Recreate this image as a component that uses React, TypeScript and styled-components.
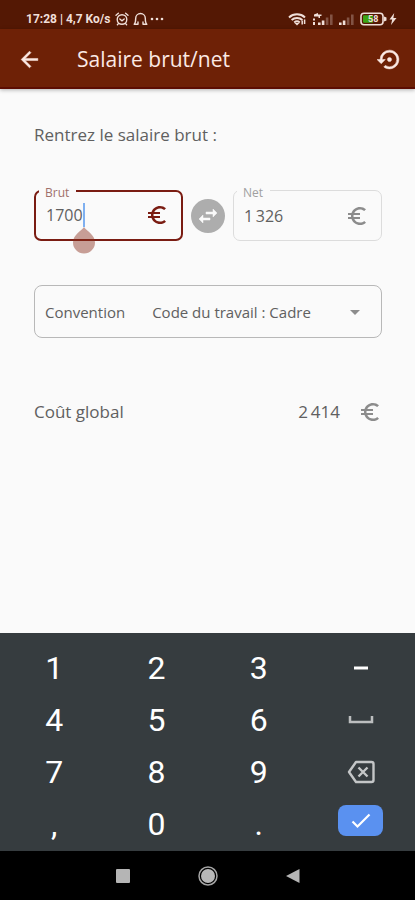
import React, { useState } from "react";
import styled, { createGlobalStyle } from "styled-components";
import {
  MdArrowBack,
  MdArrowDropDown,
  MdEuroSymbol,
  MdSettingsBackupRestore,
  MdSwapHoriz,
} from "react-icons/md";

const Global = createGlobalStyle`
  *, *::before, *::after { box-sizing: border-box; }
  body { margin: 0; background: #fafafa; font-family: "Open Sans", "Noto Sans", sans-serif; color: #606060; }
  button, input, select { font: inherit; color: inherit; border: 0; margin: 0; padding: 0; background: none; outline: none; }
  button { cursor: pointer; }
  svg { display: block; flex: none; }
`;

const Screen = styled.div`
  min-height: 100vh;
  display: flex;
  flex-direction: column;
`;

const StatusBar = styled.div`
  display: flex;
  align-items: center;
  justify-content: space-between;
  height: 29px;
  padding: 9px 18px 0 26px;
  background: #541804;
  color: #f0dfd9;
  font: 700 12px/16px Roboto, sans-serif;
`;

const StatusGroup = styled.div<{ $gap: number }>`
  display: flex;
  align-items: center;
  gap: ${(p) => p.$gap}px;
`;

const AppBar = styled.header`
  display: flex;
  align-items: center;
  height: 60px;
  padding: 2px 14px 0 17px;
  background: #6e2106;
  border-bottom: 2px solid #5c0d02;
  box-shadow: 0 1px 4px rgba(0, 0, 0, 0.3);
  color: #fbe9e4;
`;

const Title = styled.h1`
  flex: 1;
  margin: 0 0 0 36px;
  font-size: 21px;
  line-height: 28px;
  font-weight: 400;
`;

const IconButton = styled.button`
  display: grid;
  place-items: center;
  width: 24px;
  height: 24px;

  path:not([fill="none"]) {
    stroke: currentColor;
    stroke-width: 0.5;
  }
`;

const Content = styled.main`
  flex: 1;
  display: flex;
  flex-direction: column;
  padding: 34px 33px 0 34px;
`;

const Prompt = styled.p`
  margin: 0;
  font-size: 17px;
  line-height: 24px;
`;

const AmountRow = styled.div`
  display: grid;
  grid-template-columns: 1fr 34px 1fr;
  column-gap: 8px;
  align-items: end;
  margin-top: 33px;
`;

const Field = styled.fieldset<{ $active?: boolean }>`
  min-width: 0;
  margin: 0;
  padding: 0 12px 0 10px;
  border: ${(p) => (p.$active ? "2px solid #7a1c12" : "1px solid #dcdcdc")};
  border-radius: 7px;
`;

const Legend = styled.legend<{ $active?: boolean }>`
  margin-left: -7px;
  padding: 5px 7px 0 6px;
  font-size: 12px;
  line-height: 16px;
  color: ${(p) => (p.$active ? "#a0706a" : "#a0a0a0")};
`;

const FieldBody = styled.div<{ $active?: boolean }>`
  display: flex;
  align-items: center;
  height: ${(p) => (p.$active ? 38 : 39)}px;
  padding-bottom: 10px;
  color: ${(p) => (p.$active ? "#7a1c12" : "#8c8c8c")};

  svg {
    margin-left: auto;
  }
`;

const Amount = styled.input`
  width: 5ch;
  height: 24px;
  font-size: 16px;
  color: #606060;
`;

const EditedAmount = styled(Amount)`
  width: 4ch;
`;

const Caret = styled.span`
  position: relative;
  width: 2px;
  height: 24px;
  background: #7fb0f0;
`;

const Handle = styled.svg`
  position: absolute;
  top: 24px;
  left: -12px;
`;

const SwapButton = styled.button`
  display: grid;
  place-items: center;
  width: 34px;
  height: 34px;
  margin-bottom: 8px;
  border-radius: 50%;
  background: #adadad;
  color: #fafafa;

  path:not([fill="none"]) {
    stroke: currentColor;
    stroke-width: 0.5;
  }
`;

const Convention = styled.div`
  display: flex;
  align-items: center;
  height: 53px;
  margin-top: 44px;
  padding: 0 14px 0 10px;
  border: 1px solid #b8b8b8;
  border-radius: 8px;
  font-size: 15px;
`;

const SelectBox = styled.div`
  flex: 1;
  display: grid;
  align-items: center;
  margin-left: 27px;

  > * {
    grid-area: 1 / 1;
  }

  svg {
    justify-self: end;
    pointer-events: none;
    color: #8c8c8c;
  }
`;

const Select = styled.select`
  appearance: none;
  width: 100%;
  height: 32px;
`;

const TotalRow = styled.div`
  display: flex;
  align-items: center;
  margin-top: 62px;
  font-size: 17px;
  line-height: 24px;

  svg {
    margin-left: 18px;
    color: #8c8c8c;
  }
`;

const TotalLabel = styled.span`
  flex: 1;
`;

const Keyboard = styled.section`
  display: grid;
  grid-template-columns: repeat(4, 1fr);
  grid-auto-rows: 52px;
  padding: 9px 3px 1px;
  background: #363c3f;
`;

const Key = styled.button`
  display: grid;
  place-items: center;
  color: #fff;
  font: 400 32px/52px Roboto, sans-serif;
`;

const EnterKey = styled.button`
  display: grid;
  place-items: center;
  place-self: start center;
  width: 45px;
  height: 31px;
  margin-top: 7px;
  border-radius: 8px;
  background: #5a91f0;
`;

const NavBar = styled.nav`
  display: flex;
  align-items: center;
  justify-content: center;
  gap: 53px;
  height: 49px;
  background: #000;
`;

const NavButton = styled.button`
  display: grid;
  place-items: center;
  width: 32px;
  height: 32px;
`;

const AlarmIcon = () => (
  <svg width="14" height="14" viewBox="0 0 14 14" fill="none" stroke="currentColor" strokeWidth="1.4" strokeLinecap="round">
    <circle cx="7" cy="7.5" r="4.8" />
    <path d="M1 3.2 3.4 1.2M13 3.2 10.6 1.2M4.8 7 7 8.8 9.2 7M3.4 11.6l-1 1.2M10.6 11.6l1 1.2" />
  </svg>
);

const HeadsetIcon = () => (
  <svg width="15" height="14" viewBox="0 0 15 14" fill="none" stroke="currentColor" strokeWidth="1.4" strokeLinecap="round" strokeLinejoin="round">
    <path d="M5 12.300H1.200C2.600 11 2.700 9 2.700 6.300a4.800 4.800 0 0 1 9.600 0c0 2.700.1 4.700 1.500 6H10M5 12.300V10M10 12.300V10" />
  </svg>
);

const DotsIcon = () => (
  <svg width="14" height="4" viewBox="0 0 14 4" fill="currentColor">
    <circle cx="2" cy="2" r="1.3" />
    <circle cx="7" cy="2" r="1.3" />
    <circle cx="12" cy="2" r="1.3" />
  </svg>
);

const WifiIcon = () => (
  <svg width="19" height="14" viewBox="0 0 19 14" fill="none" stroke="currentColor" strokeWidth="2">
    <path d="M1 5.400a12 12 0 0 1 16 0M3.600 8a8 8 0 0 1 10.800 0M6.200 10.400a4.400 4.400 0 0 1 5.600 0" />
    <path d="M6.500 11h5L9 13.600z" fill="currentColor" stroke="none" />
    <path d="M14.200 12.500V8.500M16.600 7.500v4.500" strokeWidth="1.500" />
  </svg>
);

const SignalIcon = ({ dual }: { dual?: boolean }) => (
  <svg width={dual ? 22 : 16} height="14" viewBox={dual ? "-6 0 22 14" : "0 0 16 14"} fill="currentColor">
    <path d="M0 10.5h2.600V13H0zM3.800 8.500h2.600V13H3.800z" />
    <path d="M7.800 5.500h2.600V13H7.800zM12 2.500h2.600V13H12z" opacity="0.3" />
    {dual && <path d="M-5 10h2v3h-2zM-5 6.500h2v2h-2zM-4 2.600 0 1v1.600h3.500v1.500H2V6H.5V4.400H-4z" />}
  </svg>
);

const BatteryIcon = () => (
  <svg width="27" height="14" viewBox="0 0 27 14">
    <rect x="1" y="1.2" width="22" height="11.6" rx="3" fill="none" stroke="currentColor" strokeWidth="1.6" />
    <rect x="3" y="3.2" width="10" height="7.6" rx="1" fill="#3da514" />
    <path d="M24 4.500v5l2.500-1V5.500z" fill="currentColor" />
    <text x="8" y="10.4" fontSize="9" fontWeight="700" fontFamily="Roboto, sans-serif" fill="currentColor">58</text>
  </svg>
);

const BoltIcon = () => (
  <svg width="8" height="12" viewBox="0 0 8 12" fill="currentColor">
    <path d="M5.2 0 .5 6.6h2.7L2 12l5.5-7H4.4z" />
  </svg>
);

const digits = (n: number) => String(n).replace(/(\d)(\d{3})$/, "$1\u2009$2");

export default function App() {
  const [gross, setGross] = useState("1700");
  const [agreement, setAgreement] = useState("cadre");
  const press = (key: string) => () => setGross((v) => v + key);
  const key = (k: string) => (
    <Key type="button" key={k} onClick={press(k)}>{k}</Key>
  );

  return (
    <Screen>
      <Global />
      <StatusBar>
        <StatusGroup $gap={5}>
          <span>17:28 | 4,7 Ko/s</span>
          <StatusGroup $gap={4}>
            <AlarmIcon />
            <StatusGroup $gap={2}>
              <HeadsetIcon />
              <DotsIcon />
            </StatusGroup>
          </StatusGroup>
        </StatusGroup>
        <StatusGroup $gap={5}>
          <WifiIcon />
          <SignalIcon dual />
          <SignalIcon />
          <StatusGroup $gap={2}>
            <BatteryIcon />
            <BoltIcon />
          </StatusGroup>
        </StatusGroup>
      </StatusBar>
      <AppBar>
        <IconButton type="button" aria-label="Retour"><MdArrowBack size={25} /></IconButton>
        <Title>Salaire brut/net</Title>
        <IconButton type="button" aria-label="Réinitialiser" onClick={() => setGross("1700")}>
          <MdSettingsBackupRestore size={25} />
        </IconButton>
      </AppBar>

      <Content>
        <Prompt>Rentrez le salaire brut :</Prompt>
        <AmountRow>
          <Field $active>
            <Legend $active><label htmlFor="gross">Brut</label></Legend>
            <FieldBody $active>
              <EditedAmount id="gross" inputMode="decimal" value={gross} onChange={(e) => setGross(e.target.value)} />
              <Caret>
                <Handle width="26" height="28" viewBox="0 0 26 28" fill="#8a2e1c" fillOpacity="0.45">
                  <path d="M13 0c2.500 4 11 7.500 11 15.500a11 11 0 0 1-22 0C2 7.500 10.500 4 13 0z" />
                </Handle>
              </Caret>
              <MdEuroSymbol size={24} />
            </FieldBody>
          </Field>
          <SwapButton type="button" aria-label="Inverser"><MdSwapHoriz size={24} /></SwapButton>
          <Field>
            <Legend><label htmlFor="net">Net</label></Legend>
            <FieldBody>
              <Amount id="net" readOnly value={digits(1326)} />
              <MdEuroSymbol size={24} />
            </FieldBody>
          </Field>
        </AmountRow>

        <Convention>
          <label htmlFor="agreement">Convention</label>
          <SelectBox>
            <Select id="agreement" value={agreement} onChange={(e) => setAgreement(e.target.value)}>
              <option value="cadre">Code du travail : Cadre</option>
            </Select>
            <MdArrowDropDown size={24} />
          </SelectBox>
        </Convention>

        <TotalRow>
          <TotalLabel>Coût global</TotalLabel>
          <span>{digits(2414)}</span>
          <MdEuroSymbol size={24} />
        </TotalRow>
      </Content>

      <Keyboard aria-label="Clavier">
        {["1", "2", "3"].map(key)}
        <Key type="button" aria-label="Moins">
          <svg width="16" height="4" viewBox="0 0 16 4"><path d="M1 2h14" stroke="#fff" strokeWidth="3" /></svg>
        </Key>
        {["4", "5", "6"].map(key)}
        <Key type="button" aria-label="Espace">
          <svg width="26" height="8" viewBox="0 0 26 8"><path d="M2 0v6h22V0" fill="none" stroke="#bcbebf" strokeWidth="2.500" /></svg>
        </Key>
        {["7", "8", "9"].map(key)}
        <Key type="button" aria-label="Effacer" onClick={() => setGross((v) => v.slice(0, -1))}>
          <svg width="28" height="24" viewBox="0 0 28 24" fill="none" stroke="#c4c6c7" strokeWidth="2.400">
            <path d="M9 2h15.500a2 2 0 0 1 2 2v16a2 2 0 0 1-2 2H9L2 12z" strokeLinejoin="round" />
            <path d="m11.500 7.500 9 9m0-9-9 9" />
          </svg>
        </Key>
        {[",", "0", "."].map(key)}
        <EnterKey type="button" aria-label="Valider">
          <svg width="20" height="16" viewBox="0 0 20 16"><path d="m1.500 8.500 5 5L18.500 1.500" fill="none" stroke="#fff" strokeWidth="2.200" /></svg>
        </EnterKey>
      </Keyboard>
      <NavBar>
        <NavButton type="button" aria-label="Applications récentes">
          <svg width="14" height="14" viewBox="0 0 14 14"><rect width="14" height="14" rx="1" fill="#b5b5b5" /></svg>
        </NavButton>
        <NavButton type="button" aria-label="Accueil">
          <svg width="20" height="20" viewBox="0 0 20 20">
            <circle cx="10" cy="10" r="9" fill="none" stroke="#a5a5a5" strokeWidth="1.500" />
            <circle cx="10" cy="10" r="7" fill="#b8b8b8" />
          </svg>
        </NavButton>
        <NavButton type="button" aria-label="Précédent">
          <svg width="14" height="16" viewBox="0 0 14 16"><path d="M13.500 1v14L0 8z" fill="#b5b5b5" /></svg>
        </NavButton>
      </NavBar>
    </Screen>
  );
}
